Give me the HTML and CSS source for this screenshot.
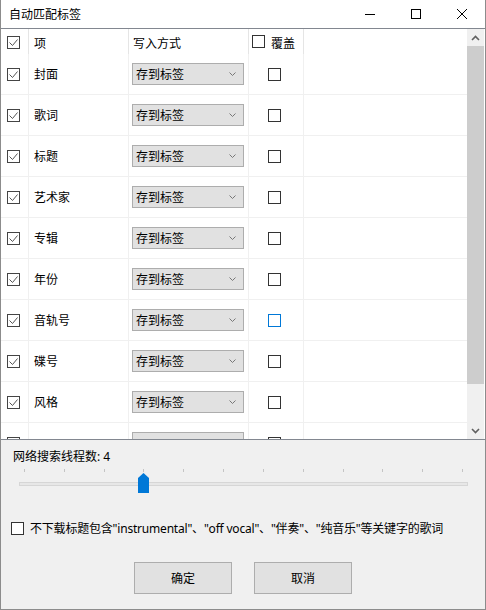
FILE: index.html
```html
<!DOCTYPE html>
<html lang="zh-CN">
<head>
  <meta charset="UTF-8">
  <title>自动匹配标签</title>
  <link rel="stylesheet" href="styles.css">
</head>
<body>

  <div class="window">
    <!-- Title bar -->
    <div class="titlebar">
      <div class="title">自动匹配标签</div>
      <div class="caption-btn">
        <svg width="10" height="10"><path d="M0 5.5H10" stroke="#000"/></svg>
      </div>
      <div class="caption-btn">
        <svg width="10" height="10"><rect x="0.5" y="0.5" width="9" height="9" fill="none" stroke="#000"/></svg>
      </div>
      <div class="caption-btn">
        <svg width="10" height="10"><path d="M0 0L10 10M10 0L0 10" stroke="#000"/></svg>
      </div>
    </div>

    <!-- Tag list -->
    <div class="list">
      <div class="grid">
        <div class="row head">
          <div class="cell"><span class="cb on"><svg width="11" height="11"><path d="M1.5 5.5l3 3 5-6" fill="none" stroke="#555"/></svg></span></div>
          <div class="cell name">项</div>
          <div class="cell mode">写入方式</div>
          <div class="cell over"><span class="cb"></span><span class="over-text">覆盖</span></div>
          <div class="cell"></div>
        </div>

        <div class="row">
          <div class="cell"><span class="cb on"><svg width="11" height="11"><path d="M1.5 5.5l3 3 5-6" fill="none" stroke="#555"/></svg></span></div>
          <div class="cell name">封面</div>
          <div class="cell"><div class="combo">存到标签<svg width="7" height="4"><path d="M0.5 0.5L3.5 3.5L6.5 0.5" fill="none" stroke="#777"/></svg></div></div>
          <div class="cell"><span class="cb box"></span></div>
          <div class="cell"></div>
        </div>
        <div class="row">
          <div class="cell"><span class="cb on"><svg width="11" height="11"><path d="M1.5 5.5l3 3 5-6" fill="none" stroke="#555"/></svg></span></div>
          <div class="cell name">歌词</div>
          <div class="cell"><div class="combo">存到标签<svg width="7" height="4"><path d="M0.5 0.5L3.5 3.5L6.5 0.5" fill="none" stroke="#777"/></svg></div></div>
          <div class="cell"><span class="cb box"></span></div>
          <div class="cell"></div>
        </div>
        <div class="row">
          <div class="cell"><span class="cb on"><svg width="11" height="11"><path d="M1.5 5.5l3 3 5-6" fill="none" stroke="#555"/></svg></span></div>
          <div class="cell name">标题</div>
          <div class="cell"><div class="combo">存到标签<svg width="7" height="4"><path d="M0.5 0.5L3.5 3.5L6.5 0.5" fill="none" stroke="#777"/></svg></div></div>
          <div class="cell"><span class="cb box"></span></div>
          <div class="cell"></div>
        </div>
        <div class="row">
          <div class="cell"><span class="cb on"><svg width="11" height="11"><path d="M1.5 5.5l3 3 5-6" fill="none" stroke="#555"/></svg></span></div>
          <div class="cell name">艺术家</div>
          <div class="cell"><div class="combo">存到标签<svg width="7" height="4"><path d="M0.5 0.5L3.5 3.5L6.5 0.5" fill="none" stroke="#777"/></svg></div></div>
          <div class="cell"><span class="cb box"></span></div>
          <div class="cell"></div>
        </div>
        <div class="row">
          <div class="cell"><span class="cb on"><svg width="11" height="11"><path d="M1.5 5.5l3 3 5-6" fill="none" stroke="#555"/></svg></span></div>
          <div class="cell name">专辑</div>
          <div class="cell"><div class="combo">存到标签<svg width="7" height="4"><path d="M0.5 0.5L3.5 3.5L6.5 0.5" fill="none" stroke="#777"/></svg></div></div>
          <div class="cell"><span class="cb box"></span></div>
          <div class="cell"></div>
        </div>
        <div class="row">
          <div class="cell"><span class="cb on"><svg width="11" height="11"><path d="M1.5 5.5l3 3 5-6" fill="none" stroke="#555"/></svg></span></div>
          <div class="cell name">年份</div>
          <div class="cell"><div class="combo">存到标签<svg width="7" height="4"><path d="M0.5 0.5L3.5 3.5L6.5 0.5" fill="none" stroke="#777"/></svg></div></div>
          <div class="cell"><span class="cb box"></span></div>
          <div class="cell"></div>
        </div>
        <div class="row">
          <div class="cell"><span class="cb on"><svg width="11" height="11"><path d="M1.5 5.5l3 3 5-6" fill="none" stroke="#555"/></svg></span></div>
          <div class="cell name">音轨号</div>
          <div class="cell"><div class="combo">存到标签<svg width="7" height="4"><path d="M0.5 0.5L3.5 3.5L6.5 0.5" fill="none" stroke="#777"/></svg></div></div>
          <div class="cell"><span class="cb box hover"></span></div>
          <div class="cell"></div>
        </div>
        <div class="row">
          <div class="cell"><span class="cb on"><svg width="11" height="11"><path d="M1.5 5.5l3 3 5-6" fill="none" stroke="#555"/></svg></span></div>
          <div class="cell name">碟号</div>
          <div class="cell"><div class="combo">存到标签<svg width="7" height="4"><path d="M0.5 0.5L3.5 3.5L6.5 0.5" fill="none" stroke="#777"/></svg></div></div>
          <div class="cell"><span class="cb box"></span></div>
          <div class="cell"></div>
        </div>
        <div class="row">
          <div class="cell"><span class="cb on"><svg width="11" height="11"><path d="M1.5 5.5l3 3 5-6" fill="none" stroke="#555"/></svg></span></div>
          <div class="cell name">风格</div>
          <div class="cell"><div class="combo">存到标签<svg width="7" height="4"><path d="M0.5 0.5L3.5 3.5L6.5 0.5" fill="none" stroke="#777"/></svg></div></div>
          <div class="cell"><span class="cb box"></span></div>
          <div class="cell"></div>
        </div>
        <!-- next row, scrolled below the visible area -->
        <div class="row">
          <div class="cell"><span class="cb on"></span></div>
          <div class="cell name"></div>
          <div class="cell"><div class="combo"></div></div>
          <div class="cell"><span class="cb box"></span></div>
          <div class="cell"></div>
        </div>
      </div>

      <!-- Vertical scrollbar -->
      <div class="scrollbar">
        <div class="arrow"><svg width="9" height="6"><path d="M1 5L4.5 1.5L8 5" fill="none" stroke="#606060" stroke-width="1.6"/></svg></div>
        <div class="thumb"></div>
        <div class="track"></div>
        <div class="arrow"><svg width="9" height="6"><path d="M1 1L4.5 4.5L8 1" fill="none" stroke="#606060" stroke-width="1.6"/></svg></div>
      </div>
    </div>

    <!-- Options -->
    <div class="panel">
      <div class="threads">网络搜索线程数: 4</div>
      <div class="slider">
        <div class="ticks">
          <span></span><span></span><span></span><span></span><span></span><span></span>
          <span></span><span></span><span></span><span></span><span></span><span></span>
        </div>
        <div class="rail"></div>
        <svg class="knob" width="11" height="20"><path d="M5.5 0L11 5V20H0V5Z" fill="#0078d7"/></svg>
      </div>

      <div class="option">
        <span class="cb box"></span>
        <span class="option-text">不下载标题包含"instrumental"、"off vocal"、"伴奏"、"纯音乐"等关键字的歌词</span>
      </div>

      <div class="buttons">
        <button>确定</button>
        <button>取消</button>
      </div>
    </div>
  </div>

</body>
</html>
```

FILE: styles.css
```css
body {
  margin: 0;
  background-color: #fff;
  font-family: "Noto Sans", "Noto Sans CJK SC", sans-serif;
  font-size: 12px;
  color: #000;
}

.window {
  width: 486px;
  height: 610px;
  box-sizing: border-box;
  border: 1px solid #8c8c8c;
  border-top: none;
  display: flex;
  flex-direction: column;
  background-color: #f0f0f0;
  overflow: hidden;
}

/* Title bar */
.titlebar {
  height: 28px;
  flex-shrink: 0;
  display: flex;
  align-items: center;
  background-color: #fff;
}

.title {
  flex: 1;
  padding-left: 8px;
}

.caption-btn {
  width: 46px;
  height: 28px;
  display: flex;
  align-items: center;
  justify-content: center;
}

/* List */
.list {
  height: 410px;
  flex-shrink: 0;
  display: flex;
  border-top: 1px solid #828790;
  border-bottom: 1px solid #828790;
  background-color: #fff;
  padding-right: 1px;
}

.grid {
  flex: 1;
  overflow: hidden;
}

.row {
  display: grid;
  grid-template-columns: 28px 100px 120px 55px 1fr;
  height: 41px;
  box-sizing: border-box;
  border-bottom: 1px solid #f0f0f0;
}

.row.head {
  height: 25px;
  border-bottom: none;
}

.cell {
  display: flex;
  align-items: center;
  box-sizing: border-box;
  border-right: 1px solid #f0f0f0;
}

.cell:last-child {
  border-right: none;
}

.head .cell {
  border-right-color: #e5e5e5;
  padding-top: 2px;
}

.head .cell:last-child {
  border-right: none;
}

.cell.name {
  padding-left: 5px;
}

.cell.mode {
  padding-left: 4px;
}

.cell.over {
  padding-left: 3px;
}

.over-text {
  margin-left: 6px;
}

/* Checkboxes */
.cb {
  width: 13px;
  height: 13px;
  box-sizing: border-box;
  border: 1px solid #333;
  background-color: #fff;
  display: flex;
  align-items: center;
  justify-content: center;
  flex-shrink: 0;
}

.cell .cb.on {
  margin-left: 6px;
  border-color: #444;
}

.head .cell.over .cb {
  margin-top: -2px;
}

.cell .cb.box {
  margin-left: 19px;
}

.cb.hover {
  border-color: #0078d7;
}

/* Combo box */
.combo {
  width: 112px;
  height: 22px;
  margin-left: 3px;
  box-sizing: border-box;
  border: 1px solid #adadad;
  background-color: #e1e1e1;
  display: flex;
  align-items: center;
  justify-content: space-between;
  padding: 0 7px 0 3px;
}

/* Scrollbar */
.scrollbar {
  width: 17px;
  display: flex;
  flex-direction: column;
  background-color: #f0f0f0;
}

.arrow {
  height: 17px;
  display: flex;
  align-items: center;
  justify-content: center;
}

.thumb {
  height: 338px;
  background-color: #cdcdcd;
}

.track {
  flex: 1;
}

/* Bottom panel */
.panel {
  flex: 1;
  display: flex;
  flex-direction: column;
}

.threads {
  padding: 9px 0 0 12px;
  line-height: 16px;
}

.slider {
  position: relative;
  height: 30px;
  margin: 0 17px 0 18px;
}

.ticks {
  display: flex;
  justify-content: space-between;
  padding: 0 5px;
  margin-top: 4px;
}

.ticks span {
  width: 1px;
  height: 3px;
  background-color: #c4c4c4;
}

.rail {
  height: 4px;
  margin-top: 10px;
  box-sizing: border-box;
  border: 1px solid #d6d6d6;
  background-color: #e7e7e7;
}

.knob {
  position: absolute;
  left: 119px;
  top: 8px;
}

.option {
  display: flex;
  align-items: center;
  height: 26px;
  margin-top: 20px;
  padding-left: 10px;
}

.option-text {
  margin-left: 6px;
  letter-spacing: -0.2px;
}

.buttons {
  display: flex;
  justify-content: center;
  gap: 22px;
  margin-top: 21px;
}

button {
  width: 98px;
  height: 32px;
  border: 1px solid #adadad;
  background-color: #e1e1e1;
  font-family: "Noto Sans", "Noto Sans CJK SC", sans-serif;
  font-size: 12px;
  color: #000;
  padding: 0;
}
```
